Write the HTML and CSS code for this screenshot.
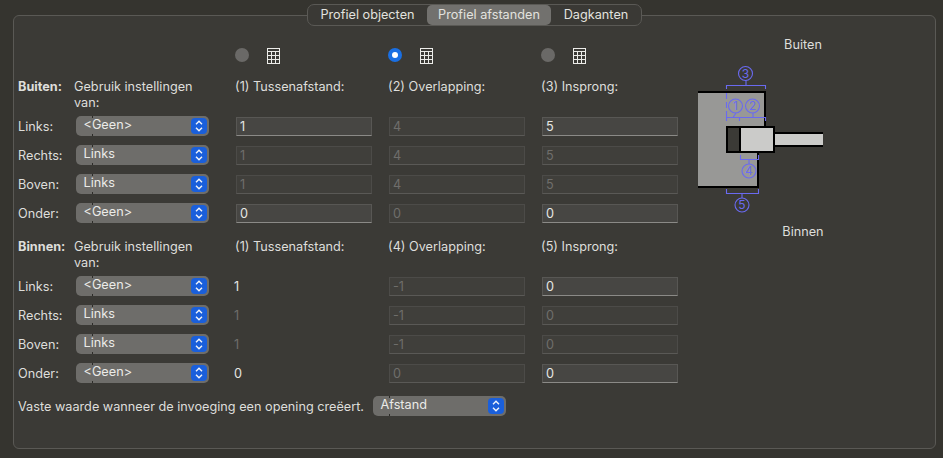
FILE: index.html
```html
<!DOCTYPE html>
<html lang="nl">
<head>
<meta charset="utf-8">
<title>Profiel afstanden</title>
<link rel="stylesheet" href="styles.css">
</head>
<body>
<svg class="defs" width="0" height="0">
  <symbol id="table" viewBox="0 0 13 16">
    <rect x="0.5" y="0.5" width="12" height="15" fill="none" stroke="#ecece9"/>
    <path d="M0 3.5H13M0 7.5H13M0 11.5H13M4.5 3V16M8.5 3V16" stroke="#ecece9" fill="none"/>
  </symbol>
  <symbol id="chev" viewBox="0 0 16 16">
    <path d="M5 6.3 8 3.3 11 6.3M5 9.7 8 12.7 11 9.7" fill="none" stroke="#f2f5fb" stroke-width="1.4"/>
  </symbol>
</svg>
<div class="window">
  <nav class="tabs">
    <span class="tab tab-a">Profiel objecten</span>
    <span class="tab tab-b active">Profiel afstanden</span>
    <span class="tab tab-c">Dagkanten</span>
  </nav>
  <main class="panel">
    <div class="form">
      <div class="row radios">
        <span></span><span></span>
        <div class="pick"><i class="radio"></i><svg class="table"><use href="#table"/></svg></div>
        <div class="pick"><i class="radio on"></i><svg class="table"><use href="#table"/></svg></div>
        <div class="pick"><i class="radio"></i><svg class="table"><use href="#table"/></svg></div>
      </div>

      <div class="row head">
        <b>Buiten:</b><span class="use">Gebruik instellingen van:</span>
        <span class="col">(1) Tussenafstand:</span><span class="col">(2) Overlapping:</span><span class="col">(3) Insprong:</span>
      </div>
      <div class="row"><label>Links:</label><div class="select"><span>&lt;Geen&gt;</span><em><svg><use href="#chev"/></svg></em></div>
        <input class="field" value="1"><input class="field" value="4" disabled><input class="field" value="5"></div>
      <div class="row"><label>Rechts:</label><div class="select"><span>Links</span><em><svg><use href="#chev"/></svg></em></div>
        <input class="field" value="1" disabled><input class="field" value="4" disabled><input class="field" value="5" disabled></div>
      <div class="row"><label>Boven:</label><div class="select"><span>Links</span><em><svg><use href="#chev"/></svg></em></div>
        <input class="field" value="1" disabled><input class="field" value="4" disabled><input class="field" value="5" disabled></div>
      <div class="row"><label>Onder:</label><div class="select"><span>&lt;Geen&gt;</span><em><svg><use href="#chev"/></svg></em></div>
        <input class="field" value="0"><input class="field" value="0" disabled><input class="field" value="0"></div>

      <div class="row head second">
        <b>Binnen:</b><span class="use">Gebruik instellingen van:</span>
        <span class="col">(1) Tussenafstand:</span><span class="col">(4) Overlapping:</span><span class="col">(5) Insprong:</span>
      </div>
      <div class="row"><label>Links:</label><div class="select"><span>&lt;Geen&gt;</span><em><svg><use href="#chev"/></svg></em></div>
        <span class="value">1</span><input class="field" value="-1" disabled><input class="field" value="0"></div>
      <div class="row"><label>Rechts:</label><div class="select"><span>Links</span><em><svg><use href="#chev"/></svg></em></div>
        <span class="value dim">1</span><input class="field" value="-1" disabled><input class="field" value="0" disabled></div>
      <div class="row"><label>Boven:</label><div class="select"><span>Links</span><em><svg><use href="#chev"/></svg></em></div>
        <span class="value dim">1</span><input class="field" value="-1" disabled><input class="field" value="0" disabled></div>
      <div class="row"><label>Onder:</label><div class="select"><span>&lt;Geen&gt;</span><em><svg><use href="#chev"/></svg></em></div>
        <span class="value">0</span><input class="field" value="0" disabled><input class="field" value="0"></div>

      <div class="foot">
        <label>Vaste waarde wanneer de invoeging een opening creëert.</label>
        <div class="select"><span>Afstand</span><em><svg><use href="#chev"/></svg></em></div>
      </div>
    </div>

    <aside class="side">
      <div class="side-title">Buiten</div>
      <svg class="diagram" width="226" height="155" viewBox="690 60 226 155">
        <path d="M698 91H765V125H775V152H758V186H698Z" fill="#989896"/>
        <path d="M698 91H765V125M758 152V186H698" fill="none" stroke="#000" stroke-width="2"/>
        <rect x="727" y="126" width="13" height="25" fill="#3b3a36"/>
        <rect x="740" y="126" width="34" height="25" fill="#cbcbc9"/>
        <rect x="775" y="132" width="48" height="13" fill="#cbcbc9"/>
        <path d="M727 126H774V151H727ZM740 126V151M775 132H823M775 145H823" fill="none" stroke="#000" stroke-width="2"/>
        <g class="dim-lines">
          <path d="M726.500 88V84.500H765.500V88M746 79V84.500"/>
          <path d="M726.500 92V116" stroke-dasharray="6 3"/>
          <path d="M726.500 120V116.500H765.500V120M739.500 116.500V120M736 112 733 116.500M753 112V116.500"/>
          <path d="M740.500 154V158.500H758.500V154M749 158.500V163"/>
          <path d="M726.500 188V192.500H758.500V188M742 192.500V197"/>
          <circle cx="745.500" cy="72.500" r="7"/>
          <circle cx="735.500" cy="105" r="7"/>
          <circle cx="752.500" cy="105" r="7"/>
          <circle cx="749" cy="170" r="7"/>
          <circle cx="742" cy="204" r="7"/>
        </g>
        <g class="dim-nums">
          <text x="745.500" y="76.800">3</text>
          <text x="735.500" y="109.300">1</text>
          <text x="752.500" y="109.300">2</text>
          <text x="749" y="174.300">4</text>
          <text x="742" y="208.300">5</text>
        </g>
      </svg>
      <div class="side-title">Binnen</div>
    </aside>
  </main>
</div>
</body>
</html>
```
FILE: styles.css
```css
* { box-sizing: border-box; }

html, body {
  margin: 0;
  height: 100%;
}

body {
  background: #35342f;
  color: #dededb;
  font: 12.7px/16px Inter, "Noto Sans", sans-serif;
  overflow: hidden;
}

.defs { position: absolute; }

.window {
  display: flex;
  flex-direction: column;
  align-items: center;
  padding: 4px 7px 9px 13px;
  height: 458px;
}

.tabs {
  display: flex;
  position: relative;
  z-index: 1;
  height: 22px;
  margin-bottom: -11px;
  padding: 0;
  background: #3a3935;
  border: 1px solid #5a5955;
  border-radius: 7px;
}

.tab {
  display: flex;
  align-items: center;
  justify-content: center;
  border-radius: 5px;
  color: #e2e2df;
}
.tab-a { width: 119px; }
.tab-b { width: 124px; }
.tab-c { width: 90px; }
.tab.active { background: #72716e; }

.panel {
  flex: 1;
  align-self: stretch;
  display: flex;
  padding: 21px 0 0 4px;
  background: #3b3a36;
  border: 1px solid #5a5955;
  border-radius: 6px;
}

.form {
  width: 672px;
  padding-top: 11px;
}

.side {
  width: 226px;
  margin-left: 0;
  display: flex;
  flex-direction: column;
  align-items: center;
  text-align: center;
}
.side-title { height: 16px; }
.diagram { display: block; margin: 8px 0; }
.dim-lines { fill: none; stroke: #6a6af0; stroke-width: 1.1; }
.dim-nums text { fill: #6a6af0; font-size: 12px; text-anchor: middle; }

.row {
  display: grid;
  grid-template-columns: 58px 160px 153px 153px 136px;
  align-items: center;
  height: 20px;
  margin-top: 9px;
}

.row label { padding-top: 2px; }

.radios { height: 16px; margin-top: 0; }
.pick { display: flex; align-items: center; margin-left: -1px; }
.radio {
  width: 14px;
  height: 14px;
  margin-top: -2px;
  border-radius: 50%;
  background: #6a6967;
  margin-right: 18px;
  display: flex;
  align-items: center;
  justify-content: center;
}
.radio.on { background: #1a6fe3; }
.radio.on::after {
  content: "";
  width: 6px;
  height: 6px;
  border-radius: 50%;
  background: #fff;
}
.table { width: 13px; height: 16px; display: block; }

.head {
  height: 32px;
  margin-top: 15px;
  align-items: start;
}
.second { margin-top: 16px; }
.row + .row.head + .row { margin-top: 5px; }
.head b { font-weight: 700; }
.use { margin-left: -2px; width: 133px; }
.col { margin-left: -1px; white-space: nowrap; }

.select {
  display: flex;
  align-items: center;
  justify-content: space-between;
  width: 133px;
  height: 20px;
  padding: 0 2px 0 7.5px;
  border-radius: 5px;
  background-color: #6e6d6a;
  background-image: linear-gradient(#2c2b28, #2c2b28), linear-gradient(#2c2b28, #2c2b28);
  background-size: 1px 2px;
  background-repeat: no-repeat;
  background-position: 16px 0, 16px 100%;
  color: #ebebe8;
}
.select span { padding-bottom: 2px; }
.select em {
  display: block;
  width: 16px;
  height: 16px;
  border-radius: 4px;
  background: #1a5fdb;
}
.select em svg { display: block; width: 16px; height: 16px; }

.field {
  width: 136px;
  height: 19px;
  margin: 1px 0 0;
  padding: 0 3px;
  background: #474643;
  border: 1px solid #585754;
  border-bottom-color: #8b8a87;
  border-radius: 0;
  color: #e6e6e3;
  font: inherit;
  outline: none;
}
.field:disabled {
  background: #403f3b;
  border-color: #4c4b48;
  border-bottom-color: #5a5956;
  color: #6f6e6b;
}

.value { margin-left: -2px; padding-top: 2px; color: #e6e6e3; }
.value.dim { color: #6f6e6b; }

.foot {
  display: grid;
  grid-template-columns: 355px 133px;
  align-items: center;
  margin-top: 13px;
}
.foot label { padding-top: 2px; white-space: nowrap; }
```
